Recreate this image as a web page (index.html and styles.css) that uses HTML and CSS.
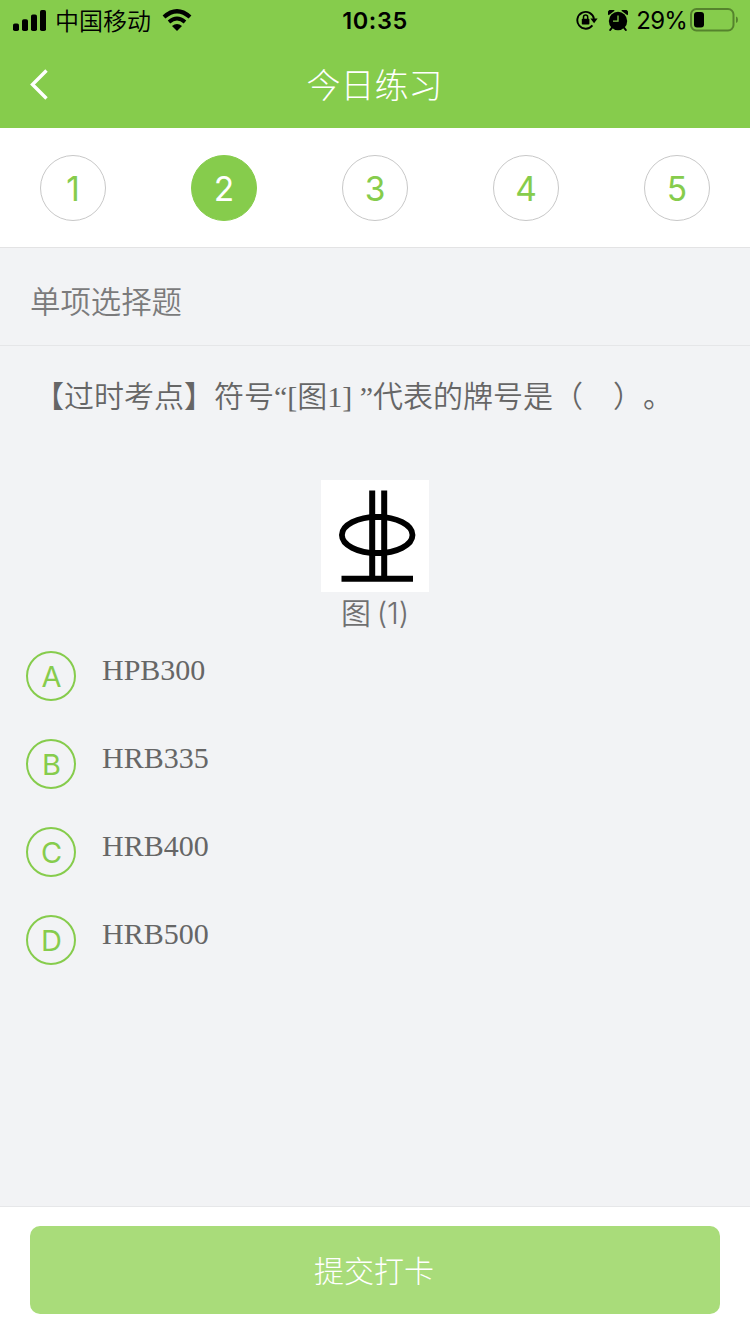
FILE: index.html
```html
<!DOCTYPE html>
<html lang="zh-CN">
<head>
<meta charset="utf-8">
<title>今日练习</title>
<link rel="stylesheet" href="styles.css">
</head>
<body>
<div class="app">
  <header class="top">
    <div class="status">
      <div class="status-left">
        <svg class="signal" width="33" height="21" viewBox="0 0 33 21"><rect x="0" y="13.5" width="6" height="7.5" rx="1.8"/><rect x="9" y="9.3" width="6" height="11.7" rx="1.8"/><rect x="18" y="4.5" width="6" height="16.5" rx="1.8"/><rect x="27" y="0" width="6" height="21" rx="1.8"/></svg>
        <span class="carrier">中国移动</span>
        <svg class="wifi" width="30" height="22" viewBox="0 0 30 22"><path d="M2 8Q15-3.6 28 8" fill="none" stroke="#000" stroke-width="4.2"/><path d="M7 13Q15 6 23 13" fill="none" stroke="#000" stroke-width="3.8"/><path d="M10 16.9Q15 13 20 16.9L15 22Z"/></svg>
      </div>
      <div class="time">10:35</div>
      <div class="status-right">
        <svg class="lock" width="22" height="20" viewBox="0 0 22 20"><path d="M16.4 15.4A8.4 8.4 0 1 1 18 8.8" fill="none" stroke="#000" stroke-width="1.9"/><path d="M14.4 8.6H21.6L18.1 13.2Z"/><rect x="5.8" y="8.8" width="7.6" height="5.8" rx=".8"/><path d="M7.5 9V7.2a2.1 2.1 0 0 1 4.2 0V9" fill="none" stroke="#000" stroke-width="1.5"/></svg>
        <svg class="alarm" width="20" height="21" viewBox="0 0 20 21"><circle cx="10" cy="11" r="9.2"/><path d="M.6 5.2A3.6 3.6 0 0 1 6.6.8ZM19.4 5.2A3.6 3.6 0 0 0 13.4.8Z"/><path d="M4.2 17.4L2.2 20M15.8 17.4L17.8 20" stroke="#000" stroke-width="2" stroke-linecap="round"/><path d="M10 5.5V11.2H5" fill="none" stroke="#86cc4c" stroke-width="1.3"/></svg>
        <span class="percent">29%</span>
        <svg class="battery" width="49" height="24" viewBox="0 0 49 24"><rect x="1" y="1" width="42.5" height="21.5" rx="5.5" fill="none" stroke="#55832d" stroke-width="2"/><rect x="4" y="4" width="10" height="15.5" rx="3"/><path d="M46 8.5Q48 9 48 11.7T46 15Z" fill="#55832d"/></svg>
      </div>
    </div>
    <div class="nav">
      <svg class="back" width="18" height="31" viewBox="0 0 18 31"><path d="M16.5 1.5L2.5 15.5L16.5 29.5" fill="none" stroke="#fff" stroke-width="3.4"/></svg>
      <h1 class="title">今日练习</h1>
    </div>
  </header>
  <nav class="steps">
    <span class="step">1</span><span class="step active">2</span><span class="step">3</span><span class="step">4</span><span class="step">5</span>
  </nav>
  <div class="kind">单项选择题</div>
  <main class="content">
    <p class="question">【过时考点】符号“[图1] ”代表的牌号是（　）。</p>
    <figure class="figure">
      <svg class="symbol" width="108" height="112" viewBox="0 0 108 112"><rect width="108" height="112" fill="#fff"/><g fill="none" stroke="#000"><ellipse cx="56.2" cy="55" rx="35.3" ry="18.2" stroke-width="5.8"/><path d="M54 11V96H61V11Z" fill="#fff" stroke="none"/><path d="M51.2 10.5V98M63.2 10.5V98" stroke-width="6"/><path d="M54 37H61M54 73H61" stroke-width="5.8"/><path d="M20.5 98.8H92" stroke-width="6"/></g></svg>
      <figcaption class="caption">图 (1)</figcaption>
    </figure>
    <div class="options">
      <div class="option"><span class="letter">A</span><span class="answer">HPB300</span></div>
      <div class="option"><span class="letter">B</span><span class="answer">HRB335</span></div>
      <div class="option"><span class="letter">C</span><span class="answer">HRB400</span></div>
      <div class="option"><span class="letter">D</span><span class="answer">HRB500</span></div>
    </div>
  </main>
  <footer class="footer"><button class="submit">提交打卡</button></footer>
</div>
</body>
</html>
```
FILE: styles.css
```css
* { box-sizing: border-box; }
body { margin: 0; font-family: "Inter", "Noto Sans CJK SC", sans-serif; }
svg { display: block; flex: none; }
.app { width: 750px; height: 1334px; display: flex; flex-direction: column; background: #f2f3f5; overflow: hidden; }
.top { height: 128px; background: #86cc4c; flex: none; }
.status { height: 40px; display: grid; grid-template-columns: 1fr auto 1fr; align-items: center; color: #000; }
.status-left { display: flex; align-items: center; padding-left: 13px; }
.carrier { margin-left: 9px; padding-top: 4px; font-size: 24px; line-height: 36px; font-weight: 350; }
.wifi { margin-left: 11px; }
.time { padding-top: 2px; font-size: 23.5px; font-weight: 600; line-height: 38px; letter-spacing: .6px; }
.status-right { display: flex; align-items: center; justify-content: flex-end; padding-right: 11px; }
.alarm { margin-left: 10px; }
.percent { margin: 1px 3px 0 8px; font-size: 24px; letter-spacing: -.8px; }
.nav { height: 88px; display: grid; grid-template-columns: 1fr auto 1fr; align-items: center; }
.back { margin-left: 30px; }
.title { margin: 0; padding: 3px 1px 0 0; color: #fff; font-size: 34px; line-height: 84px; font-weight: 300; }
.steps { height: 120px; flex: none; padding: 27px 40px 0; display: flex; justify-content: space-between; background: #fff; border-bottom: 1px solid #e3e3e4; }
.step { width: 66px; height: 66px; border: 1px solid #c8c8c8; border-radius: 50%; color: #86cc4c; font-size: 33.5px; line-height: 66px; text-align: center; }
.step.active { background: #86cc4c; border-color: #86cc4c; color: #fff; }
.kind { height: 98px; flex: none; padding: 6px 30px 0; border-bottom: 1px solid #e5e6e8; color: #7b7b7c; font-size: 30.4px; line-height: 96px; font-weight: 350; }
.content { flex: 1; }
.question { margin: 0; padding: 28px 0 0 34px; color: #666; font-family: "Liberation Serif", "Noto Sans CJK SC", serif; font-size: 30px; line-height: 45px; font-weight: 350; white-space: nowrap; text-spacing-trim: space-all; }
.figure { margin: 61px 0 0; display: flex; flex-direction: column; align-items: center; }
.caption { color: #707071; font-size: 30px; line-height: 42px; font-weight: 350; letter-spacing: -.1px; word-spacing: -2.5px; }
.options { padding: 17px 26px 0; display: flex; flex-direction: column; gap: 38px; }
.option { height: 50px; display: flex; gap: 26px; }
.letter { width: 50px; height: 50px; border: 2px solid #86cc4c; border-radius: 50%; color: #86cc4c; font-size: 29px; line-height: 48px; text-align: center; padding-left: 1px; }
.answer { color: #666; font-family: "Liberation Serif", serif; font-size: 30px; line-height: 38px; }
.footer { height: 128px; flex: none; padding: 19px 30px 0; border-top: 1px solid #e6e7e9; background: #fff; }
.submit { display: block; width: 690px; height: 88px; padding: 0 2px 2px 0; border: 0; border-radius: 10px; background: #a9dc7a; color: #fff; font: 300 30px/86px "Noto Sans CJK SC", sans-serif; }
```
